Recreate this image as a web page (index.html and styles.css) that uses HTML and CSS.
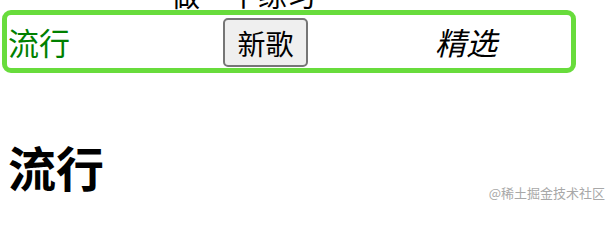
FILE: index.html
```html
<!DOCTYPE html>
<html lang="zh">
<head>
<meta charset="utf-8">
<link rel="stylesheet" href="styles.css">
</head>
<body>
<div class="title">做一个练习</div>
<nav class="nav">
  <span class="hot">流行</span>
  <button class="new">新歌</button>
  <span class="pick">精选</span>
</nav>
<h1 class="heading">流行</h1>
<div class="mark">@稀土掘金技术社区</div>
</body>
</html>
```
FILE: styles.css
```css
html, body {
  margin: 0;
  padding: 0;
  background: #fff;
}
body {
  font-family: "Noto Sans CJK SC", "Noto Sans", sans-serif;
  color: #000;
  width: 614px;
  height: 208px;
  overflow: hidden;
  position: relative;
}
.title {
  font-size: 29px;
  line-height: 29px;
  height: 29px;
  margin-top: -20px;
  padding-left: 171px;
}
.nav {
  box-sizing: border-box;
  width: 574px;
  height: 63px;
  margin: 1px 0 0 2px;
  border: 5px solid #68dc3c;
  border-radius: 9px;
  display: flex;
  align-items: center;
}
.hot {
  color: green;
  font-size: 31px;
  line-height: 1;
  margin-left: 1px;
}
.new {
  font-family: inherit;
  font-size: 28px;
  line-height: 1;
  height: 49px;
  width: 85px;
  padding: 0;
  margin: 2px 0 0 153px;
  background: #efefef;
  color: #000;
  border: 2px solid #767676;
  border-radius: 5px;
}
.pick {
  font-size: 31px;
  font-style: italic;
  line-height: 1;
  margin-left: 127px;
}
.heading {
  font-size: 48px;
  line-height: 48px;
  font-weight: bold;
  margin: 69px 0 0 8px;
}
.mark {
  position: absolute;
  right: 9px;
  top: 184px;
  font-size: 13px;
  line-height: 18px;
  color: #a8a8a8;
}
```
